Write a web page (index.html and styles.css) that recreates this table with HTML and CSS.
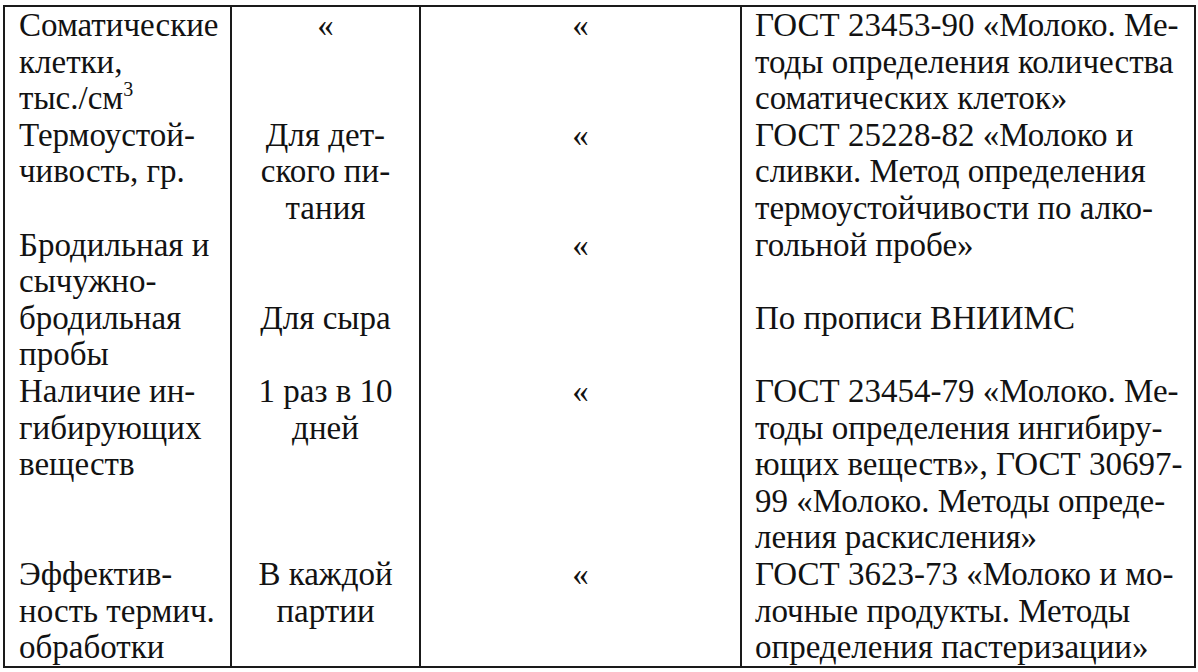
FILE: index.html
```html
<!DOCTYPE html>
<html>
<head>
<meta charset="utf-8">
<title>Milk quality control</title>
<link rel="stylesheet" href="styles.css">
</head>
<body>
<table class="quality">
  <colgroup>
    <col class="w1"><col class="w2"><col class="w3"><col class="w4">
  </colgroup>
  <tr class="r3">
    <td class="c1">Соматические<br>клетки,<br>тыс./см<sup class="sup">3</sup></td>
    <td class="c2">«</td>
    <td class="c3">«</td>
    <td class="c4">ГОСТ 23453-90 «Молоко. Ме-<br>тоды определения количества<br>соматических клеток»</td>
  </tr>
  <tr class="r3">
    <td class="c1">Термоустой-<br>чивость, гр.</td>
    <td class="c2">Для дет-<br>ского пи-<br>тания</td>
    <td class="c3">«</td>
    <td class="c4"><div class="over">ГОСТ 25228-82 «Молоко и<br>сливки. Метод определения<br>термоустойчивости по алко-<br>гольной пробе»</div></td>
  </tr>
  <tr class="r4">
    <td class="c1">Бродильная и<br>сычужно-<br>бродильная<br>пробы</td>
    <td class="c2"><div class="skip2">Для сыра</div></td>
    <td class="c3">«</td>
    <td class="c4"><div class="skip2">По прописи ВНИИМС</div></td>
  </tr>
  <tr class="r5">
    <td class="c1">Наличие ин-<br>гибирующих<br>веществ</td>
    <td class="c2">1 раз в 10<br>дней</td>
    <td class="c3">«</td>
    <td class="c4">ГОСТ 23454-79 «Молоко. Ме-<br>тоды определения ингибиру-<br>ющих веществ», ГОСТ 30697-<br>99 «Молоко. Методы опреде-<br>ления раскисления»</td>
  </tr>
  <tr class="r3">
    <td class="c1">Эффектив-<br>ность термич.<br>обработки</td>
    <td class="c2">В каждой<br>партии</td>
    <td class="c3">«</td>
    <td class="c4">ГОСТ 3623-73 «Молоко и мо-<br>лочные продукты. Методы<br>определения пастеризации»</td>
  </tr>
</table>
</body>
</html>
```

FILE: styles.css
```css
html, body {
  margin: 0;
  padding: 0;
  background: #ffffff;
}

body {
  font-family: "Liberation Serif", "Times New Roman", serif;
  font-size: 33px;
  padding: 5px 0 0 3px;
}

.quality {
  border-collapse: collapse;
  table-layout: fixed;
  width: 1191px;
  border: 2px solid #1a1a1a;
  font-family: "Liberation Serif", "Times New Roman", serif;
  font-size: 33px;
  line-height: 36.6px;
  color: #121212;
}

.w1 { width: 227px; }
.w2 { width: 189px; }
.w3 { width: 321px; }
.w4 { width: 454px; }

.quality td {
  font-family: "Liberation Serif", "Times New Roman", serif;
  padding: 0;
  vertical-align: top;
  white-space: nowrap;
  border-left: 2px solid #1a1a1a;
}

.r3 { height: 109.8px; }
.r4 { height: 146.4px; }
.r5 { height: 183px; }

.quality .c1 {
  padding-left: 14px;
  border-left: none;
}

.quality .c2,
.quality .c3 {
  text-align: center;
}

.quality .c4 {
  padding-left: 13px;
}

.over {
  height: 109.8px;
  overflow: visible;
}

.skip2 {
  padding-top: 73.2px;
}

.sup {
  font-family: "Liberation Serif", "Times New Roman", serif;
  font-size: 20px;
  line-height: 0;
  vertical-align: 13px;
}
```
